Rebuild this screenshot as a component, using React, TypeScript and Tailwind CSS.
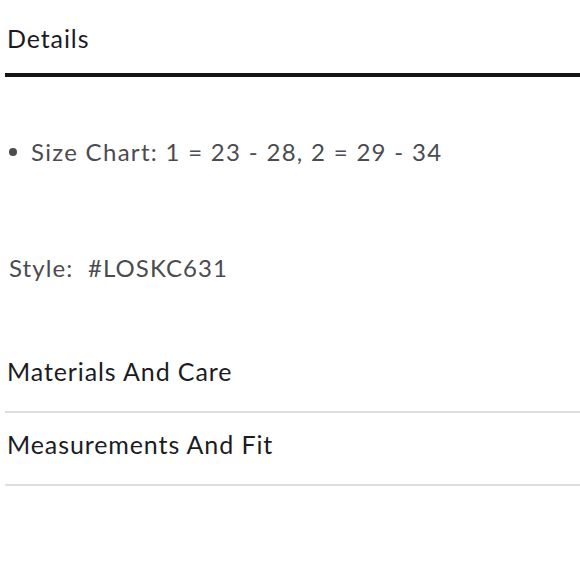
export default function App() {
  return (
    <div className="w-[580px] h-[580px] bg-white overflow-hidden" style={{ fontFamily: "Lato, 'Noto Sans', sans-serif" }}>
      <div className="pl-[7px] pt-[22px] h-[73px] text-[25px] leading-[32px] text-[#1c1c1f] tracking-[0.9px]">Details</div>
      <div className="ml-[5px] h-[4px] bg-[#141416]" />
      <div className="pt-[59px] flex items-center h-[32px] box-content text-[24px] leading-[32px] text-[#4b4b50] tracking-[1.3px]">
        <span className="ml-[9px] w-[8px] h-[8px] rounded-full bg-[#4b4b50]" />
        <span className="ml-[14px]">Size Chart: 1 = 23 - 28, 2 = 29 - 34</span>
      </div>
      <div className="pt-[84px] pl-[9px] text-[24px] leading-[32px] text-[#4b4b50] tracking-[1.1px]">Style:&nbsp; #LOSKC631</div>
      <div className="mt-[71px] ml-[5px]">
        <div className="h-[58px] border-b-2 border-[#dedede] flex items-start pl-[2px] text-[25px] leading-[32px] text-[#1c1c1f] tracking-[0.9px]">Materials And Care</div>
        <div className="h-[73px] pb-[10px] border-b-2 border-[#dedede] flex items-center pl-[2px] text-[25px] leading-[32px] text-[#1c1c1f] tracking-[0.9px]">Measurements And Fit</div>
      </div>
    </div>
  );
}
